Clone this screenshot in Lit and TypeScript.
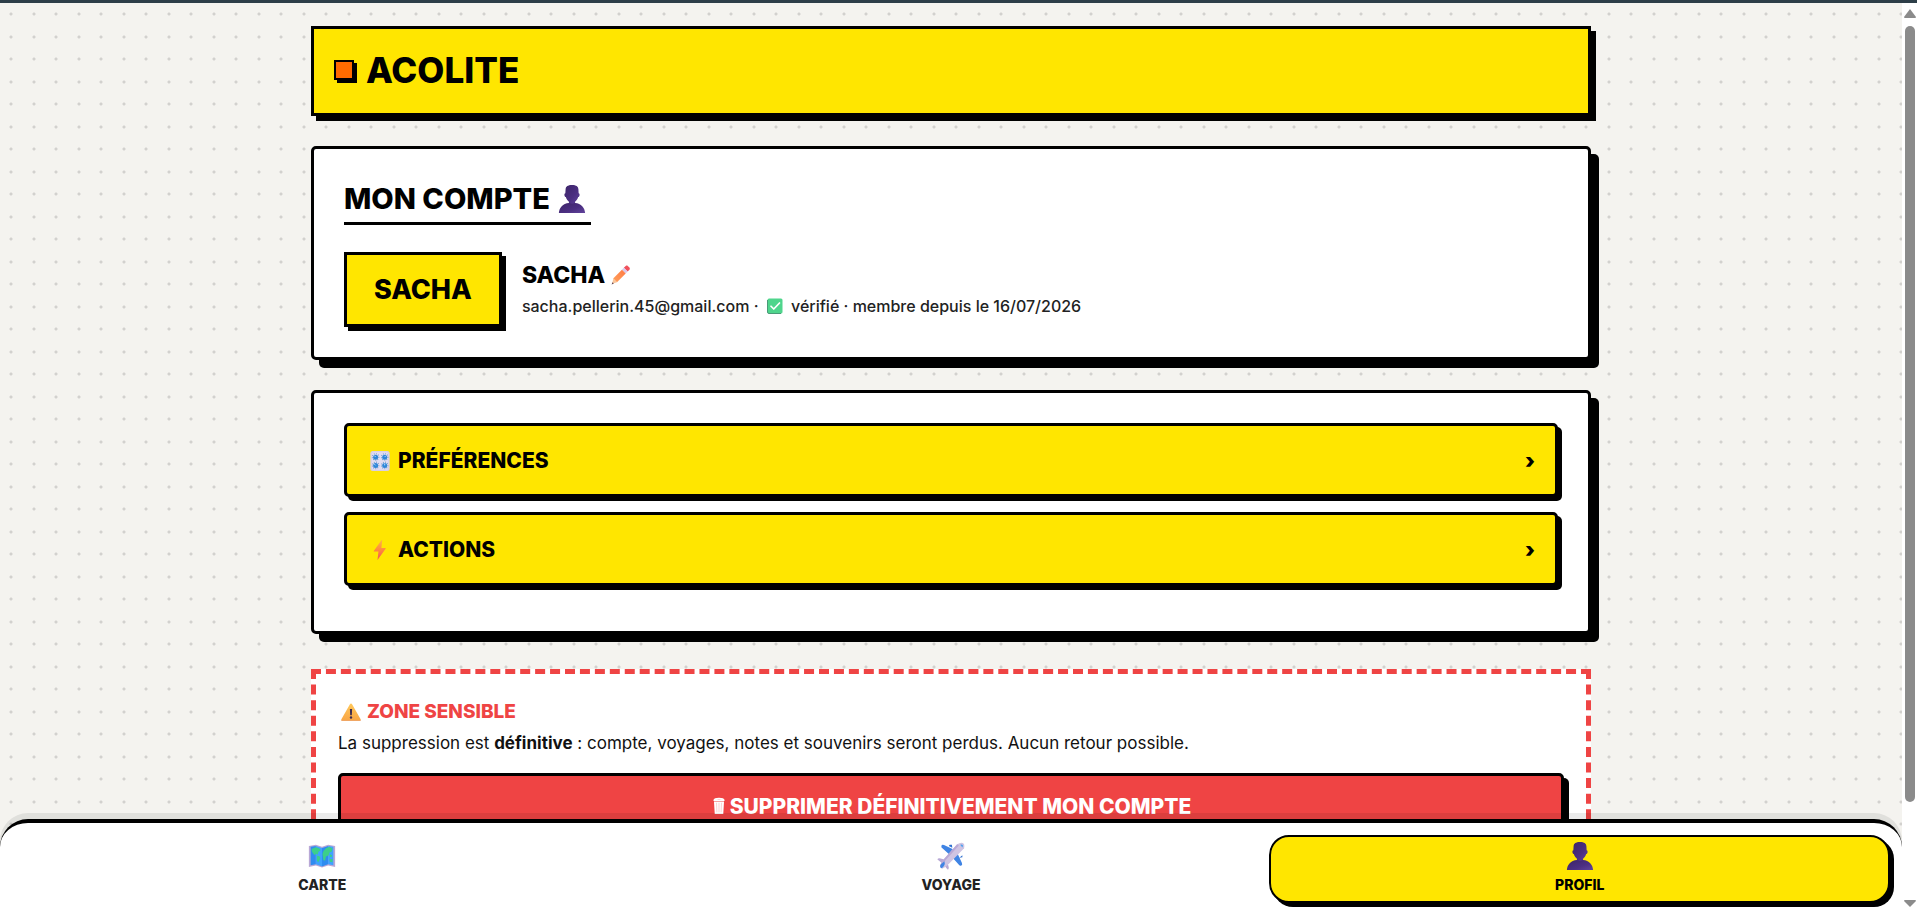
import { LitElement, html, css, svg } from "lit";
import { customElement, property } from "lit/decorators.js";

const glyphs: Record<string, unknown> = {
  person: svg`
    <defs>
      <linearGradient id="p" x1="0" y1="0" x2="1" y2="1">
        <stop offset="0" stop-color="#3c2468" /><stop offset="0.6" stop-color="#4c2f82" /><stop offset="1" stop-color="#61449c" />
      </linearGradient>
    </defs>
    <path fill="url(#p)" d="M16 0c-5 0-7 1.800-7.300 4.600L8.400 9.500c-1 .2-1.200 1.200-1 2.400.2 1 .7 1.700 1.500 1.800.8 2.300 2 4.400 3.600 5.300v2.600h7V19c1.600-.9 2.800-3 3.600-5.300.8-.1 1.300-.8 1.500-1.800.2-1.200 0-2.200-1-2.400l-.3-4.900C23 1.800 21 0 16 0z" />
    <path fill="url(#p)" d="M1 32c.4-6 4.500-11 11.500-11.500l3.500 1 3.500-1c7 .5 11.100 5.500 11.500 11.500z" />`,
  pencil: svg`
    <defs><linearGradient id="e" x1="1" y1="0" x2="0" y2="1"><stop offset="0" stop-color="#ff7a45" /><stop offset="1" stop-color="#ffa05a" /></linearGradient></defs>
    <path fill="#f0515c" d="M20.500 4.500l3-3c1-.8 2.500-.8 3.300-.1l2.700 2.700c.8.9.8 2.400 0 3.300L26.500 10.500z" />
    <path fill="#d9c9ec" d="M17.500 7.500l3-3 6 6-3 3z" />
    <path fill="url(#e)" d="M3.500 21.500l14-14 6 6-14 14z" />
    <path fill="#f9c59a" d="M3.500 21.500l6 6L2 30z" />
    <path fill="#5c3a44" d="M2.500 27.500l2 2-3.500 1.500z" />`,
  check: svg`
    <rect x="1" y="1" width="30" height="30" rx="3" fill="#4fd58c" />
    <path d="M1 4v24q0 3 3 3h24" fill="none" stroke="#4a9a78" stroke-width="2" />
    <path d="M8 16.500l5.500 5.500L25 10" fill="none" stroke="#fff" stroke-width="3.400" stroke-linecap="round" stroke-linejoin="round" />`,
  knobs: svg`
    <rect x="0.500" y="0" width="31" height="32" rx="4" fill="#d8cfe8" />
    <rect x="3" y="2" width="26" height="28" rx="3" fill="#e3dcf0" />
    <g fill="none" stroke="#77a1cf" stroke-width="1.800" stroke-dasharray="1.500 2">
      <circle cx="9" cy="9.500" r="5.200" /><circle cx="23.500" cy="9.500" r="5.200" />
      <circle cx="9" cy="23" r="5.200" /><circle cx="23.500" cy="23" r="5.200" />
    </g>
    <g fill="#2e86d8">
      <circle cx="9" cy="9.800" r="4" /><circle cx="23.500" cy="9.800" r="4" />
      <circle cx="9" cy="23.300" r="4" /><circle cx="23.500" cy="23.300" r="4" />
    </g>
    <g stroke="#bfe0ff" stroke-width="1.500"><path d="M9 9.500l-2-2M23.500 9.500l2-2M9 23l-2-2M23.500 23v-3" /></g>`,
  bolt: svg`
    <defs><linearGradient id="b" x1="0" y1="0" x2="0" y2="1"><stop offset="0" stop-color="#ffb545" /><stop offset="0.500" stop-color="#ff8a3c" /><stop offset="1" stop-color="#f4505c" /></linearGradient></defs>
    <path fill="url(#b)" d="M18.500 0L6 17.500c-.3.500 0 1 .6 1h6.900L12 32l13-18c.4-.5 0-1.200-.6-1.200h-6.200L19.500.5c0-.6-.6-.9-1-.5z" />`,
  warning: svg`
    <defs><linearGradient id="w" x1="0" y1="0" x2="0" y2="1"><stop offset="0" stop-color="#ffc85a" /><stop offset="1" stop-color="#f9a646" /></linearGradient></defs>
    <path fill="#e08a5a" d="M2 30.500h28c1.300 0 1.700-.6 1.400-1.500H.6c-.3.900.1 1.500 1.400 1.500z" />
    <path fill="url(#w)" d="M14.300 3.500c.8-1.300 2.600-1.300 3.400 0l13.700 24c.6 1-.1 2-1.400 2H2c-1.300 0-2-1-1.400-2z" />
    <path fill="#3d2c50" d="M14.200 11h3.600l-.5 10h-2.600z" /><circle cx="16" cy="24.800" r="1.900" fill="#3d2c50" />`,
  trash: svg`
    <path d="M7 4c0-4 18-4 18 0M5 4.500h22" fill="none" stroke="#fff" stroke-width="3" />
    <path d="M6 7h20l-1.500 25h-17z" fill="#fff" />
    <path d="M11 9.500l.8 19M16 9.500v19M21 9.500l-.8 19" stroke="#f8b4b4" stroke-width="1.200" />`,
  map: svg`
    <path fill="#b9a8d6" d="M1 4.500l8-1.500 7 2.500L23 3l8 1.500v24l-8-1.700-7 2.400-7-2.400-8 1.700z" />
    <path fill="#2f8cf0" d="M3 5.500l6-1v21l-6 1z" /><path fill="#3fa2ff" d="M9 4.500l7 2.400v21L9 25.500z" />
    <path fill="#2f8cf0" d="M16 6.900l7-2.400v21l-7 2.400z" /><path fill="#3fa2ff" d="M23 4.500l6 1v21l-6-1z" />
    <path fill="#3ccf8a" d="M4 8l5-2 4 1.500 1.500 2-2.500 1.500-1 3.500-2-1-1.500 1.500L6 13l-1.500-2zM10 15.500l3.500 1 .5 2.500-2.500 4.500-1.500-3zM16.500 14l1-3.500 3-3.500 4-1.500 3.500 2-1 3.500-2.500 1-1 3.500-3 1-1 5-2-1-.5-4z" />
    <path fill="#3ccf8a" d="M25 14l2.500 1-.5 2h-2zM24.500 19l3.500.8V23l-3-.5z" />`,
  plane: svg`
    <path fill="#3f84e4" d="M22 10L8 3.500Q5.500 2.500 5 4.500t1.500 3L16 16zM22 10l6.500 14q1 2.500-1 3t-3-1.500L16 16z" />
    <path fill="#2f6fd0" d="M14.500 3h2.500l.5 3.500-4-2zM29 15v2.500l-3.500.5z" />
    <path fill="#b9a9d6" d="M8.500 20L3 18.500q-2.500 0-2.500 1.500L7 25zM12 23.500l1.500 5.500q0 2.500-1.500 2.500L7 25z" />
    <path fill="#cfc4e2" d="M23 2.500q4-2.500 6.500-1.500t1.500 6L14 24.500q-4 4-8 6-3-1-2.500-3.500 1-3 4-7z" />
    <path fill="#b9a9d6" d="M23 2.500L7.500 20q-3 4-4 7l1 1.500Q6 25 9.500 21L25 4z" />
    <path fill="#4da1f0" d="M26.500 3q2.500-.5 3 .3t-.5 3z" />
    <path fill="#3f84e4" d="M5 30q-2.500-1.500-.5-4.500l4-3.500q1 3-.5 5-1 2-3 3z" />`,
};

@customElement("ac-icon")
class AcIcon extends LitElement {
  @property() name = "";

  static styles = css`
    :host { display: inline-flex; flex: none; width: 20px; height: 20px; }
    .art { width: 100%; height: 100%; display: block; overflow: visible; }
  `;

  render() {
    return html`<svg class="art" viewBox="0 0 32 32" aria-hidden="true">${glyphs[this.name]}</svg>`;
  }
}

@customElement("app-root")
class AppRoot extends LitElement {
  static styles = css`
    :host {
      display: grid;
      grid-template: 3px minmax(0, 1fr) / minmax(0, 1fr) 15px;
      height: 100vh;
      overflow: hidden;
      background: #f4f3ef;
      color: #000;
      font-family: Inter, "Liberation Sans", sans-serif;
      font-weight: 500;
    }
    * { box-sizing: border-box; }
    h1, h2, h3, p { margin: 0; }
    button, a { font: inherit; color: inherit; text-decoration: none; cursor: pointer; }

    .edge { grid-column: 1 / -1; background: #2d3e48; }
    .view { position: relative; min-height: 0; display: grid; }
    .scroller {
      min-height: 0;
      overflow-y: auto;
      scrollbar-width: none;
      padding: 23px 24px 120px;
      background-image:
        radial-gradient(circle at 11px 11px, #d2d1ce 1px, transparent 2px),
        radial-gradient(circle at 34px 11px, #d2d1ce 1px, transparent 2px),
        radial-gradient(circle at 11px 34px, #d2d1ce 1px, transparent 2px),
        radial-gradient(circle at 34px 34px, #d2d1ce 1px, transparent 2px);
      background-size: 45px 45px;
    }
    .page { max-width: 1280px; margin: 0 auto; display: flex; flex-direction: column; gap: 30px; }

    .brand {
      display: flex; align-items: center; gap: 12px;
      height: 90px; padding: 0 20px 2px;
      background: #ffe600; border: 3px solid #000; box-shadow: 5px 5px 0 #000;
    }
    .mark { width: 20px; height: 20px; background: #ff6b00; border: 2px solid #000; box-shadow: 3px 3px 0 #000; }
    .wordmark { font-size: 35px; line-height: 44px; font-weight: 800; }

    .card { padding: 30px; background: #fff; border: 3px solid #000; border-radius: 5px; box-shadow: 8px 8px 0 #000; }
    .title {
      display: inline-flex; align-items: center; gap: 8px;
      padding: 2px 5px 6px 0; border-bottom: 3px solid #000;
      font-size: 29px; line-height: 35px; font-weight: 800;
    }
    .title ac-icon { width: 28px; height: 28px; }
    .identity { display: flex; align-items: center; gap: 20px; margin-top: 27px; }
    .avatar {
      display: grid; place-items: center; height: 75px; padding: 0 27px;
      background: #ffe600; border: 3px solid #000; box-shadow: 4px 4px 0 #000;
      font-size: 27px; font-weight: 800;
    }
    .name { display: flex; align-items: center; gap: 6px; font-size: 23px; line-height: 30px; font-weight: 800; }
    .edit { display: inline-flex; padding: 0; border: 0; background: none; }
    .meta { color: #222; font-size: 16px; line-height: 24px; margin: 4px 0 2px; }
    .tick { width: 16px; height: 16px; vertical-align: -2px; margin: 0 4px 0 4px; }

    .menu { display: grid; gap: 15px; padding-bottom: 45px; }
    .row {
      display: flex; align-items: center; gap: 8px; width: 100%; height: 74px; padding: 1px 20px 0 23px;
      background: #ffe600; border: 3px solid #000; border-radius: 5px; box-shadow: 4px 4px 0 #000;
      font-size: 21px; font-weight: 800; text-align: left;
    }
    .chevron { margin-left: auto; font-weight: 900; }

    .danger { margin-top: 5px; padding: 22px; background: #fff; border: 5px dashed #ef4444; }
    .warn { display: flex; align-items: center; gap: 6px; padding-left: 3px; color: #ef4444; font-size: 19px; line-height: 32px; font-weight: 800; }
    .note { color: #111; font-size: 17px; line-height: 24px; margin-top: 3px; font-weight: 400; }
    .note strong { font-weight: 700; }
    .delete {
      display: flex; align-items: center; justify-content: center; gap: 3px;
      width: 100%; height: 66px; margin-top: 18px;
      background: #ef4444; color: #fff; border: 3px solid #000; border-radius: 5px; box-shadow: 5px 5px 0 #000;
      font-size: 21px; font-weight: 800;
    }
    .delete ac-icon { width: 16px; height: 16px; }

    .tabs {
      position: absolute; inset: auto 0 0 0;
      display: grid; grid-template-columns: repeat(3, minmax(0, 1fr)); gap: 8px;
      padding: 12px 12px 4px;
      background: #fff; border-top: 4px solid #000; border-radius: 28px 28px 0 0;
      box-shadow: 0 -6px 0 rgba(0, 0, 0, 0.08);
    }
    .tab {
      display: flex; flex-direction: column; align-items: center; gap: 6px;
      height: 68px; padding-top: 5px; border: 2px solid transparent; border-radius: 20px;
      color: #222; font-size: 14px; line-height: 18px; font-weight: 800;
    }
    .tab ac-icon { width: 28px; height: 28px; }
    .current { background: #ffe600; border-color: #000; color: #000; box-shadow: 4px 4px 0 #000; }

    .rail { display: flex; flex-direction: column; align-items: center; padding-top: 6px; background: #fff; }
    .arrow { width: 12px; height: 9px; flex: none; fill: #8b8b8b; }
    .track { flex: 1; width: 10px; margin: 8px 0 0; display: flex; flex-direction: column; }
    .thumb { height: 89%; border-radius: 5px; background: #8b8b8b; }
  `;

  private rows = [
    { icon: "knobs", label: "PRÉFÉRENCES" },
    { icon: "bolt", label: "ACTIONS" },
  ];

  private tabs = [
    { icon: "map", label: "CARTE", current: false },
    { icon: "plane", label: "VOYAGE", current: false },
    { icon: "person", label: "PROFIL", current: true },
  ];

  render() {
    return html`
      <div class="edge"></div>
      <div class="view">
        <div class="scroller">
          <main class="page">
            <header class="brand">
              <span class="mark"></span>
              <h1 class="wordmark">ACOLITE</h1>
            </header>

            <section class="card">
              <h2 class="title">MON COMPTE <ac-icon name="person"></ac-icon></h2>
              <div class="identity">
                <div class="avatar">SACHA</div>
                <div>
                  <h3 class="name">
                    SACHA
                    <button class="edit" aria-label="Modifier"><ac-icon name="pencil"></ac-icon></button>
                  </h3>
                  <p class="meta">sacha.pellerin.45@gmail.com · <ac-icon class="tick" name="check"></ac-icon> vérifié · membre depuis le 16/07/2026</p>
                </div>
              </div>
            </section>

            <section class="card menu">
              ${this.rows.map(
                (r) => html`<button class="row"><ac-icon name=${r.icon}></ac-icon>${r.label}<span class="chevron">›</span></button>`
              )}
            </section>

            <section class="danger">
              <h3 class="warn"><ac-icon name="warning"></ac-icon>ZONE SENSIBLE</h3>
              <p class="note">La suppression est <strong>définitive</strong> : compte, voyages, notes et souvenirs seront perdus. Aucun retour possible.</p>
              <button class="delete"><ac-icon name="trash"></ac-icon>SUPPRIMER DÉFINITIVEMENT MON COMPTE</button>
            </section>
          </main>
        </div>
        <nav class="tabs">
          ${this.tabs.map(
            (t) => html`<a class="tab ${t.current ? "current" : ""}" href="#${t.label.toLowerCase()}"><ac-icon name=${t.icon}></ac-icon>${t.label}</a>`
          )}
        </nav>
      </div>
      <div class="rail" aria-hidden="true">
        <svg class="arrow" viewBox="0 0 12 9"><path d="M6 0l6 8q0 1-1 1H1q-1 0-1-1z" /></svg>
        <div class="track"><div class="thumb"></div></div>
        <svg class="arrow" viewBox="0 0 12 9"><path d="M6 9L0 3q0-1 1-1h10q1 0 1 1z" /></svg>
      </div>
    `;
  }
}
